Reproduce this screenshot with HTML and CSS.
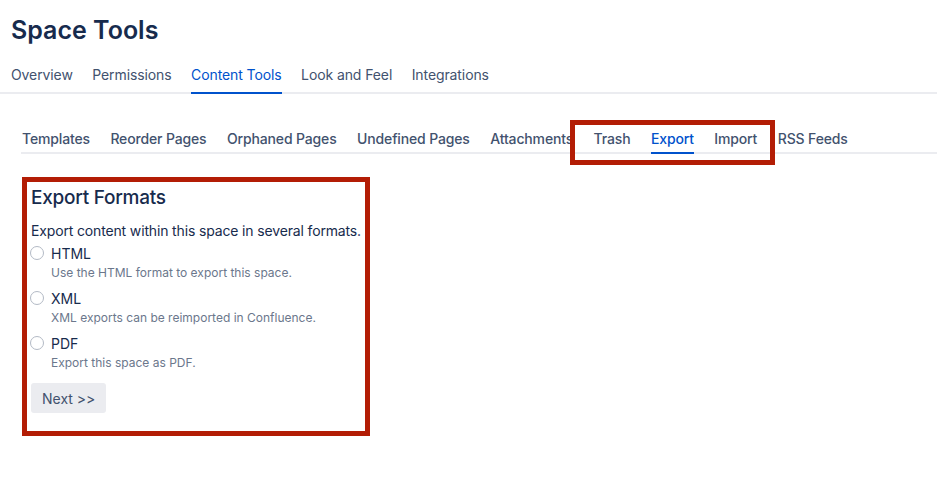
FILE: index.html
```html
<!DOCTYPE html>
<html>
<head>
    <meta charset="UTF-8">
    <title>Space Tools</title>
    <link rel="stylesheet" href="styles.css">
</head>
<body>
    <div class="page">
        <div class="header">
            <h1>Space Tools</h1>
        </div>
        <div class="main-tabs">
            <a class="tab">Overview</a>
            <a class="tab">Permissions</a>
            <a class="tab active">Content Tools</a>
            <a class="tab">Look and Feel</a>
            <a class="tab">Integrations</a>
        </div>
        <div class="content">
            <div class="sub-tabs">
                <a class="sub-tab">Templates</a>
                <a class="sub-tab">Reorder Pages</a>
                <a class="sub-tab">Orphaned Pages</a>
                <a class="sub-tab">Undefined Pages</a>
                <a class="sub-tab">Attachments</a>
                <a class="sub-tab">Trash</a>
                <a class="sub-tab active">Export</a>
                <a class="sub-tab">Import</a>
                <a class="sub-tab">RSS Feeds</a>
                <span class="highlight"></span>
            </div>
            <div class="export-box">
                <h2>Export Formats</h2>
                <p class="intro">Export content within this space in several formats.</p>
                <div class="format">
                    <label><input type="radio" name="format"> HTML</label>
                    <div class="hint">Use the HTML format to export this space.</div>
                </div>
                <div class="format">
                    <label><input type="radio" name="format"> XML</label>
                    <div class="hint">XML exports can be reimported in Confluence.</div>
                </div>
                <div class="format">
                    <label><input type="radio" name="format"> PDF</label>
                    <div class="hint">Export this space as PDF.</div>
                </div>
                <button class="next-button">Next &gt;&gt;</button>
            </div>
        </div>
    </div>
</body>
</html>
```

FILE: styles.css
```css
body {
    margin: 0;
    background-color: #fff;
    color: #172B4D;
    font-family: Inter, "Liberation Sans", sans-serif;
    font-size: 14px;
}

.header {
    padding: 14px 11px 0;
}

.header h1 {
    margin: 0;
    font-size: 25px;
    line-height: 32px;
    font-weight: 600;
    color: #172B4D;
}

.main-tabs {
    display: flex;
    gap: 19.5px;
    padding: 19px 11px 0;
    border-bottom: 2px solid #EBECF0;
}

.main-tabs .tab {
    color: #42526E;
    line-height: 20px;
    letter-spacing: -0.1px;
    padding-bottom: 7px;
    margin-bottom: -2px;
    border-bottom: 2px solid transparent;
}

.main-tabs .tab.active {
    color: #0052CC;
    border-bottom-color: #0052CC;
}

.content {
    padding: 35px 0 0 21px;
}

.sub-tabs {
    position: relative;
    display: flex;
    gap: 20.5px;
    padding-left: 1px;
    border-bottom: 2px solid #EBECF0;
}

.sub-tabs .sub-tab {
    color: #42526E;
    font-weight: 500;
    line-height: 20px;
    letter-spacing: -0.15px;
    padding-bottom: 3px;
    margin-bottom: -2px;
    border-bottom: 2px solid transparent;
}

.sub-tabs .sub-tab.active {
    color: #0052CC;
    border-bottom-color: #0052CC;
}

.highlight {
    position: absolute;
    left: 549px;
    top: -9px;
    width: 195px;
    height: 35px;
    border: 5px solid #B31D05;
}

.export-box {
    width: 334px;
    margin: 23px 0 0 1px;
    padding: 4px 0 18px 4px;
    border: 5px solid #B31D05;
}

.export-box h2 {
    margin: 0;
    font-size: 19px;
    line-height: 24px;
    font-weight: 500;
    letter-spacing: -0.25px;
    color: #172B4D;
}

.intro {
    margin: 11px 0 2px;
    font-size: 14px;
    line-height: 20px;
    letter-spacing: -0.15px;
}

.format {
    margin-bottom: 6px;
}

.format label {
    display: flex;
    align-items: center;
    height: 20px;
    color: #172B4D;
}

.format input {
    appearance: none;
    width: 14px;
    height: 14px;
    margin: 0 7px 0 -1px;
    border: 1px solid #B3BAC5;
    border-radius: 50%;
    background-color: #fff;
}

.hint {
    padding-left: 20px;
    font-size: 12px;
    line-height: 19px;
    color: #6B778C;
}

.next-button {
    margin-top: 5px;
    height: 30px;
    padding: 0 11px;
    border: none;
    border-radius: 3px;
    background-color: #EBECF0;
    color: #42526E;
    font-family: inherit;
    font-size: 14px;
}
```
